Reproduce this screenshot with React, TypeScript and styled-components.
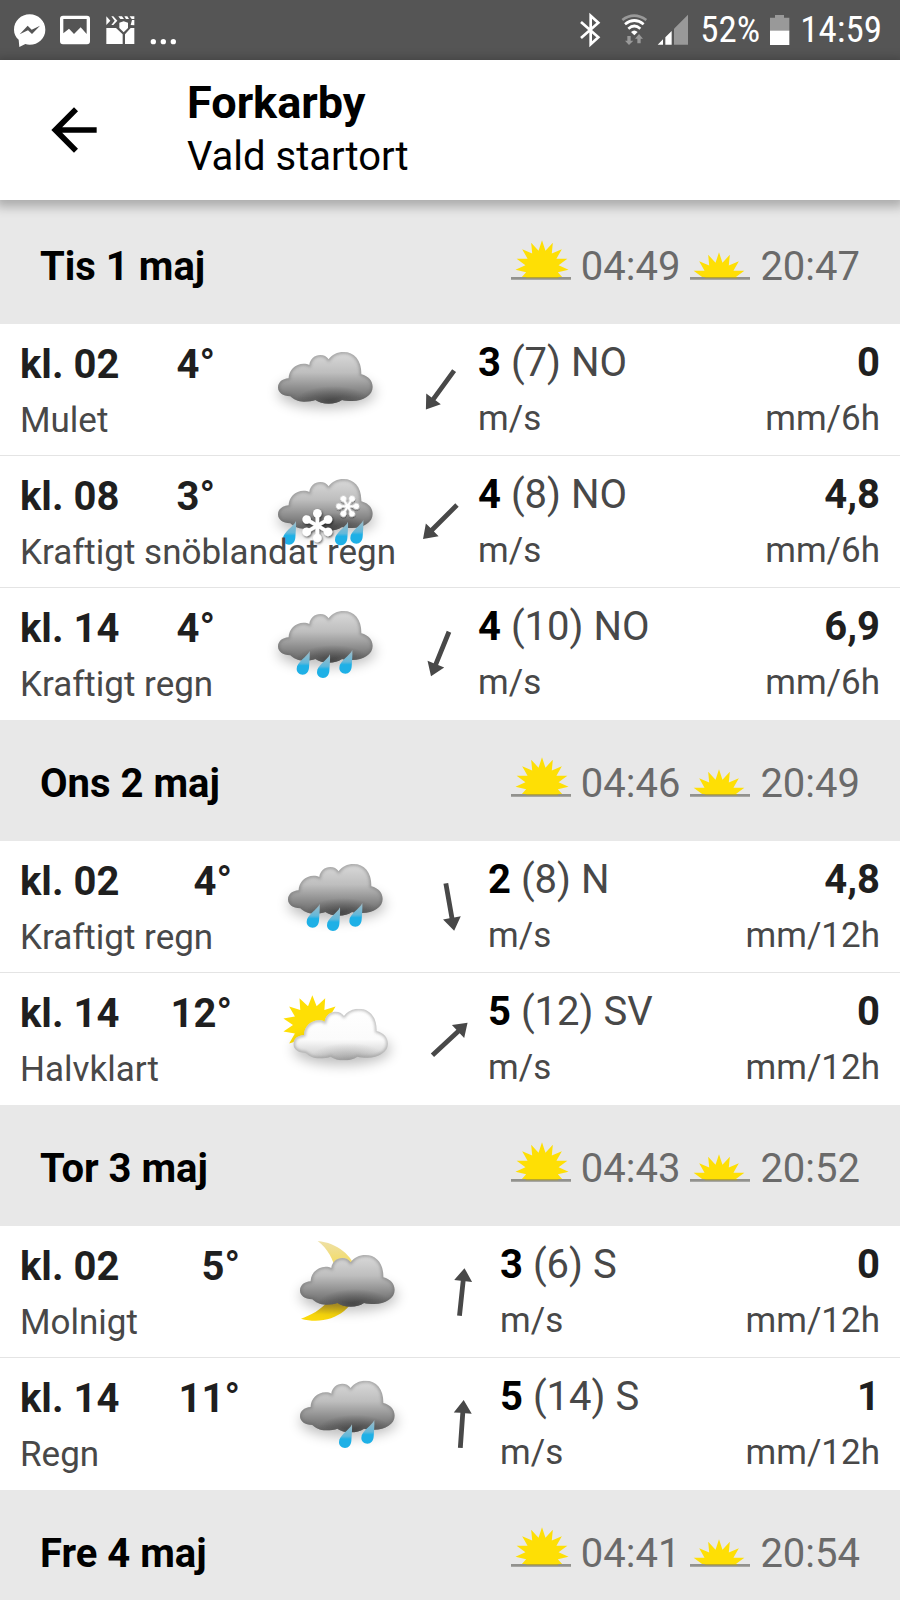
import styled, { createGlobalStyle } from "styled-components";

type Weather = "cloudy" | "sleet" | "heavyRain" | "rain" | "halfClear" | "moonCloud";

interface Forecast {
  time: string;
  temp: string;
  weather: Weather;
  label: string;
  angle: number;
  wind: string;
  gust: string;
  direction: string;
  rain: string;
}

interface Day {
  title: string;
  sunrise: string;
  sunset: string;
  tempWidth: number;
  iconWidth: number;
  unit: string;
  rows: Forecast[];
}

const days: Day[] = [
  {
    title: "Tis 1 maj",
    sunrise: "04:49",
    sunset: "20:47",
    tempWidth: 85,
    iconWidth: 163,
    unit: "mm/6h",
    rows: [
      { time: "kl. 02", temp: "4°", weather: "cloudy", label: "Mulet", angle: 216, wind: "3", gust: "(7)", direction: "NO", rain: "0" },
      { time: "kl. 08", temp: "3°", weather: "sleet", label: "Kraftigt snöblandat regn", angle: 225, wind: "4", gust: "(8)", direction: "NO", rain: "4,8" },
      { time: "kl. 14", temp: "4°", weather: "heavyRain", label: "Kraftigt regn", angle: 202, wind: "4", gust: "(10)", direction: "NO", rain: "6,9" },
    ],
  },
  {
    title: "Ons 2 maj",
    sunrise: "04:46",
    sunset: "20:49",
    tempWidth: 102,
    iconWidth: 156,
    unit: "mm/12h",
    rows: [
      { time: "kl. 02", temp: "4°", weather: "heavyRain", label: "Kraftigt regn", angle: 170, wind: "2", gust: "(8)", direction: "N", rain: "4,8" },
      { time: "kl. 14", temp: "12°", weather: "halfClear", label: "Halvklart", angle: 47, wind: "5", gust: "(12)", direction: "SV", rain: "0" },
    ],
  },
  {
    title: "Tor 3 maj",
    sunrise: "04:43",
    sunset: "20:52",
    tempWidth: 110,
    iconWidth: 160,
    unit: "mm/12h",
    rows: [
      { time: "kl. 02", temp: "5°", weather: "moonCloud", label: "Molnigt", angle: 6, wind: "3", gust: "(6)", direction: "S", rain: "0" },
      { time: "kl. 14", temp: "11°", weather: "rain", label: "Regn", angle: 4, wind: "5", gust: "(14)", direction: "S", rain: "1" },
    ],
  },
  {
    title: "Fre 4 maj",
    sunrise: "04:41",
    sunset: "20:54",
    tempWidth: 85,
    iconWidth: 163,
    unit: "mm/12h",
    rows: [],
  },
];

const GlobalStyle = createGlobalStyle`
  * {
    box-sizing: border-box;
  }

  body {
    margin: 0;
    background: #e8e8e8;
    color: #000;
    font-family: Roboto, "Liberation Sans", sans-serif;
  }
`;

const Page = styled.div`
  height: 100vh;
  display: flex;
  flex-direction: column;
  overflow: hidden;
`;

const StatusBar = styled.div`
  height: 60px;
  flex-shrink: 0;
  padding: 0 18px 0 14px;
  display: flex;
  align-items: center;
  justify-content: space-between;
  background: #555;
  color: #fff;
  font-family: "Roboto Condensed", Roboto, sans-serif;
  font-size: 37px;
  line-height: 60px;
`;

const StatusGroup = styled.div`
  display: flex;
  align-items: center;
  gap: 10px;
`;

const AppBar = styled.header`
  position: relative;
  z-index: 2;
  flex-shrink: 0;
  padding: 16px 40px;
  display: flex;
  align-items: center;
  gap: 79px;
  background: #fff;
  box-shadow: 0 3px 10px 4px rgba(0, 0, 0, 0.26);
`;

const BackButton = styled.button`
  width: 68px;
  height: 68px;
  padding: 0;
  border: none;
  background: none;
  cursor: pointer;
`;

const Title = styled.h1`
  margin: 0;
  font-size: 45px;
  font-weight: 700;
  line-height: 54px;
`;

const Subtitle = styled.p`
  margin: 0;
  font-size: 40px;
  line-height: 54px;
`;

const Main = styled.main`
  flex: 1;
  min-height: 0;
  padding-top: 3px;
  overflow: hidden;
`;

const DayHeader = styled.div`
  padding: 36px 40px 29px;
  display: flex;
  justify-content: space-between;
  background: #e8e8e8;
  font-size: 40px;
  line-height: 56px;
`;

const DayTitle = styled.h2`
  margin: 0;
  font-size: 40px;
  font-weight: 700;
`;

const SunTimes = styled.div`
  display: flex;
  gap: 10px;
  color: #6a6a6a;
`;

const Table = styled.table`
  width: 100%;
  table-layout: fixed;
  border-collapse: separate;
  border-spacing: 0;
  background: #fff;
  white-space: nowrap;
`;

const Col = styled.col<{ $width?: number }>`
  width: ${({ $width }) => ($width ? `${$width}px` : "auto")};
`;

const Row = styled.tr`
  & > * {
    height: 132px;
    border-bottom: 1px solid #e4e4e4;
    vertical-align: top;
  }

  &:last-child > * {
    border-bottom-color: #fff;
  }
`;

const TimeCell = styled.th`
  padding: 13px 0 6px 20px;
  color: #1f1f1f;
  font-size: 40px;
  line-height: 56px;
  text-align: left;
`;

const TempCell = styled.td`
  padding: 13px 0 0;
  color: #1f1f1f;
  font-size: 40px;
  font-weight: 700;
  line-height: 56px;
  text-align: right;
`;

const IconCell = styled.td<{ $top: number; $right: number }>`
  padding: ${({ $top, $right }) => `${$top}px ${$right}px 0 0`};

  svg {
    display: block;
    margin-left: auto;
  }
`;

const ValueCell = styled.td<{ $end?: boolean }>`
  padding: ${({ $end }) => ($end ? "11px 20px 0 0" : "11px 0 0")};
  color: #484848;
  font-size: 40px;
  line-height: 56px;
  text-align: ${({ $end }) => ($end ? "right" : "left")};

  b {
    color: ${({ $end }) => ($end ? "#1f1f1f" : "#000")};
  }
`;

const Small = styled.div`
  position: relative;
  z-index: 1;
  color: #484848;
  font-size: 35px;
  font-weight: 400;
`;

const CLOUD =
  "M32 79C32 55 52 35 77 35C83 35 90 36 94 39C96 21 110 9 127 9C138 9 146 13 152 22C161 8 178 0 197 0C228 0 251 24 250 67C272 73 284 87 284 105C284 130 256 147 222 147C212 147 200 146 192 144C180 152 168 155 152 155C136 155 122 151 112 144C104 148 92 149 78 149C60 149 46 142 37 133C14 132 0 122 0 106C0 92 12 80 32 79Z";

const star = (cx: number, cy: number, outer: number, inner: number, count: number) =>
  Array.from({ length: count * 2 }, (_, i) => {
    const r = i % 2 ? inner : outer;
    const a = (Math.PI * i) / count - Math.PI / 2;
    return `${(cx + r * Math.cos(a)).toFixed(1)},${(cy + r * Math.sin(a)).toFixed(1)}`;
  }).join(" ");

const HiddenSvg = styled.svg`
  position: absolute;
  width: 0;
  height: 0;
`;

// Gradients and filters shared by every weather icon on the page
const IconDefs = () => (
  <HiddenSvg aria-hidden="true">
    <defs>
      <linearGradient id="grey" x1="0" y1="0" x2="0" y2="1">
        <stop offset="0" stopColor="#dadada" />
        <stop offset="0.4" stopColor="#bebebe" />
        <stop offset="0.7" stopColor="#8e8e8e" />
        <stop offset="1" stopColor="#606060" />
      </linearGradient>
      <linearGradient id="white" x1="0" y1="0" x2="0" y2="1">
        <stop offset="0" stopColor="#fff" />
        <stop offset="0.6" stopColor="#fbfbfb" />
        <stop offset="1" stopColor="#c4c4c4" />
      </linearGradient>
      <radialGradient id="under">
        <stop offset="0" stopColor="#222" stopOpacity="0.55" />
        <stop offset="1" stopColor="#222" stopOpacity="0" />
      </radialGradient>
      <linearGradient id="drop" x1="0" y1="0" x2="0" y2="1">
        <stop offset="0" stopColor="#a3bcc6" />
        <stop offset="0.5" stopColor="#62b8da" />
        <stop offset="0.62" stopColor="#1eb0e6" />
      </linearGradient>
      <linearGradient id="moon" x1="0" y1="0" x2="0" y2="1">
        <stop offset="0" stopColor="#eee0a8" />
        <stop offset="0.27" stopColor="#f3dc68" />
        <stop offset="0.8" stopColor="#d0ae2c" />
        <stop offset="0.92" stopColor="#fbd90c" />
      </linearGradient>
      <filter id="soft" x="-30%" y="-60%" width="160%" height="220%">
        <feGaussianBlur stdDeviation="19" />
      </filter>
      <filter id="edge">
        <feGaussianBlur stdDeviation="5" />
      </filter>
      <filter id="flake" x="-30%" y="-30%" width="160%" height="160%">
        <feDropShadow dx="3" dy="4" stdDeviation="3" floodOpacity="0.6" />
      </filter>
      <clipPath id="cloudClip">
        <path d={CLOUD} />
      </clipPath>
    </defs>
  </HiddenSvg>
);

const Cloud = ({ white }: { white?: boolean }) => (
  <g>
    <path d={CLOUD} fill={`url(#${white ? "white" : "grey"})`} />
    <g clipPath="url(#cloudClip)">
      <ellipse cx="165" cy="152" rx="115" ry="50" fill="url(#under)" opacity={white ? 0.4 : 1} />
      <path d={CLOUD} fill="none" stroke={white ? "#999" : "#666"} strokeWidth="9" opacity={white ? 0.7 : 0.5} filter="url(#edge)" />
    </g>
  </g>
);

const CloudShadow = () => (
  <ellipse cx="146" cy="122" rx="146" ry="46" fill="#000" opacity="0.26" filter="url(#soft)" />
);

const Drop = ({ x, y }: { x: number; y: number }) => (
  <path
    transform={`translate(${x} ${y})`}
    d="M0 0C-8 18 -39 32 -39 54C-39 64 -31 71 -21 71C-10 71 -3 62 -2 50C-1 34 1 14 0 0Z"
    fill="url(#drop)"
  />
);

const Flake = ({ x, y, size, turn }: { x: number; y: number; size: number; turn: number }) => (
  <g transform={`translate(${x} ${y}) rotate(${turn}) scale(${size})`} filter="url(#flake)">
    {[0, 60, 120, 180, 240, 300].map((a) => (
      <g key={a} transform={`rotate(${a})`}>
        <path d="M0 0V-32" stroke="#fff" strokeWidth="11" />
        <circle cy="-37" r="13" fill="#fff" />
      </g>
    ))}
  </g>
);

const WeatherIcon = ({ type, label }: { type: Weather; label: string }) => {
  const dx = type === "halfClear" ? 76 : 60;
  const dy = { cloudy: 54, sleet: 39, heavyRain: 39, rain: 38, halfClear: 77, moonCloud: 57 }[type];
  return (
    <svg width="120" height="100" viewBox="0 0 360 300" overflow="visible" role="img" aria-label={label}>
      <g transform={`translate(${dx} ${dy})`}>
        {type === "halfClear" && <polygon points={star(57, 49, 89, 58, 14)} fill="#fedf05" />}
        {type === "moonCloud" && (
          <path
            d="M53 -42C128 -35 183 25 173 95C166 165 88 215 3 191C68 170 108 125 108 70C108 25 88 -15 53 -42Z"
            fill="url(#moon)"
          />
        )}
        <CloudShadow />
        <Cloud white={type === "halfClear"} />
        {type === "heavyRain" && (
          <>
            <Drop x={95} y={120} />
            <Drop x={156} y={130} />
            <Drop x={223} y={117} />
          </>
        )}
        {type === "rain" && (
          <>
            <Drop x={156} y={131} />
            <Drop x={223} y={118} />
          </>
        )}
        {type === "sleet" && (
          <>
            <Drop x={54} y={126} />
            <Drop x={210} y={128} />
            <Drop x={256} y={123} />
            <Flake x={118} y={140} size={1} turn={0} />
            <Flake x={209} y={82} size={0.7} turn={30} />
          </>
        )}
      </g>
    </svg>
  );
};

const WindArrow = ({ angle }: { angle: number }) => (
  <svg width="50" height="50" viewBox="-25 -25 50 50" overflow="visible" aria-hidden="true">
    <path
      transform={`rotate(${angle})`}
      d="M0 -24L9 -11H2.4V24H-2.4V-11H-9Z"
      fill="#484848"
    />
  </svg>
);

const SunIcon = ({ set }: { set?: boolean }) => (
  <svg width="60" height="44" viewBox="0 0 180 132" aria-hidden="true">
    <g transform="translate(0 -13)">
      <svg width="180" height="133" viewBox="0 0 180 133">
        <polygon points={star(set ? 87 : 93, set ? 133 : 97, 80, 50, 15)} fill="#fedf05" />
      </svg>
      <path d="M0 131H180" stroke="#92928e" strokeWidth="8" />
      <path d="M44 129H142" stroke="#b8a62e" strokeWidth="4" />
    </g>
  </svg>
);

const NotificationIcons = () => (
  <svg width="164" height="60" viewBox="42 0 492 180" fill="#fff" aria-hidden="true">
    <path d="M89 43C63 43 42 63 42 89C42 101 47 111 56 119L58 141L76 132C80 133 84 134 89 134C115 134 136 115 136 89C136 63 115 43 89 43Z" />
    <path d="M59 103L83 77L95 89L120 77L96 102L84 91Z" fill="#555" />
    <path
      fillRule="evenodd"
      d="M189 47H261Q270 47 270 56V124Q270 133 261 133H189Q180 133 180 124V56Q180 47 189 47ZM190 57V100L207 86L222 102L242 82L260 102V57Z"
    />
    <path d="M319 49L331 62L319 75ZM334 49H340L352 62L340 75H334L344 62ZM355 49H366L372 57H361ZM373 49H382L387 57H378ZM389 49H403V57H395ZM396 60H403V76L392 75Z" />
    <path d="M319 84H348L368 103V132H319ZM403 84H392L375 103V132H403ZM358 68L371 64L384 68V84L371 97L358 84Z" />
    <circle cx="460" cy="125" r="8" />
    <circle cx="490" cy="125" r="8" />
    <circle cx="520" cy="125" r="8" />
  </svg>
);

const SignalIcons = () => (
  <svg width="110" height="60" viewBox="66 0 330 180" aria-hidden="true">
    <path d="M69 66L121 112L98 133V47L121 68L69 114" fill="none" stroke="#fff" strokeWidth="8" />
    <g fill="none" strokeWidth="8">
      <path d="M193 60Q228 34 265 60" stroke="#999" />
      <path d="M201 73Q229 50 257 73M211 86Q229 70 247 86" stroke="#fff" />
    </g>
    <path d="M219 96Q229 87 239 96L229 106Z" fill="#fff" />
    <path d="M208 108H218V122H226L213 135L201 122H208ZM238 130V116H231L243 102L255 116H248V130Z" fill="#999" />
    <path d="M299 134L315 118V134ZM322 112L341 93V134H322Z" fill="#fff" />
    <path d="M348 86L390 44V134H348Z" fill="#999" />
  </svg>
);

const BatteryIcon = () => (
  <svg width="20" height="60" viewBox="630 0 60 180" aria-hidden="true">
    <path d="M630 53H645V45H672V53H688V94H630Z" fill="#999" />
    <path d="M630 92H688V135H630Z" fill="#fff" />
  </svg>
);

const DaySection = ({ day }: { day: Day }) => (
  <section>
    <DayHeader>
      <DayTitle>{day.title}</DayTitle>
      <SunTimes>
        <SunIcon />
        <time>{day.sunrise}</time>
        <SunIcon set />
        <time>{day.sunset}</time>
      </SunTimes>
    </DayHeader>
    {day.rows.length > 0 && (
      <Table aria-label={day.title}>
        <colgroup>
          <Col $width={130} />
          <Col $width={day.tempWidth} />
          <Col $width={day.iconWidth} />
          <Col $width={100} />
          <Col $width={240} />
          <Col />
        </colgroup>
        <tbody>
          {day.rows.map((row) => (
            <Row key={row.time}>
              <TimeCell scope="row">
                {row.time}
                <Small>{row.label}</Small>
              </TimeCell>
              <TempCell>{row.temp}</TempCell>
              <IconCell $top={10} $right={0}>
                <WeatherIcon type={row.weather} label={row.label} />
              </IconCell>
              <IconCell $top={41} $right={13}>
                <WindArrow angle={row.angle} />
              </IconCell>
              <ValueCell>
                <b>{row.wind}</b> {row.gust} {row.direction}
                <Small>m/s</Small>
              </ValueCell>
              <ValueCell $end>
                <b>{row.rain}</b>
                <Small>{day.unit}</Small>
              </ValueCell>
            </Row>
          ))}
        </tbody>
      </Table>
    )}
  </section>
);

export default function App() {
  return (
    <>
      <GlobalStyle />
      <IconDefs />
      <Page>
        <StatusBar>
          <NotificationIcons />
          <StatusGroup>
            <SignalIcons />
            <span>52%</span>
            <BatteryIcon />
            <span>14:59</span>
          </StatusGroup>
        </StatusBar>
        <AppBar>
          <BackButton type="button" aria-label="Tillbaka">
            <svg width="68" height="68" viewBox="0 0 24 24" aria-hidden="true">
              <path d="M20 11H7.83l5.59-5.59L12 4l-8 8 8 8 1.41-1.41L7.83 13H20v-2z" />
            </svg>
          </BackButton>
          <div>
            <Title>Forkarby</Title>
            <Subtitle>Vald startort</Subtitle>
          </div>
        </AppBar>
        <Main>
          {days.map((day) => (
            <DaySection key={day.title} day={day} />
          ))}
        </Main>
      </Page>
    </>
  );
}
